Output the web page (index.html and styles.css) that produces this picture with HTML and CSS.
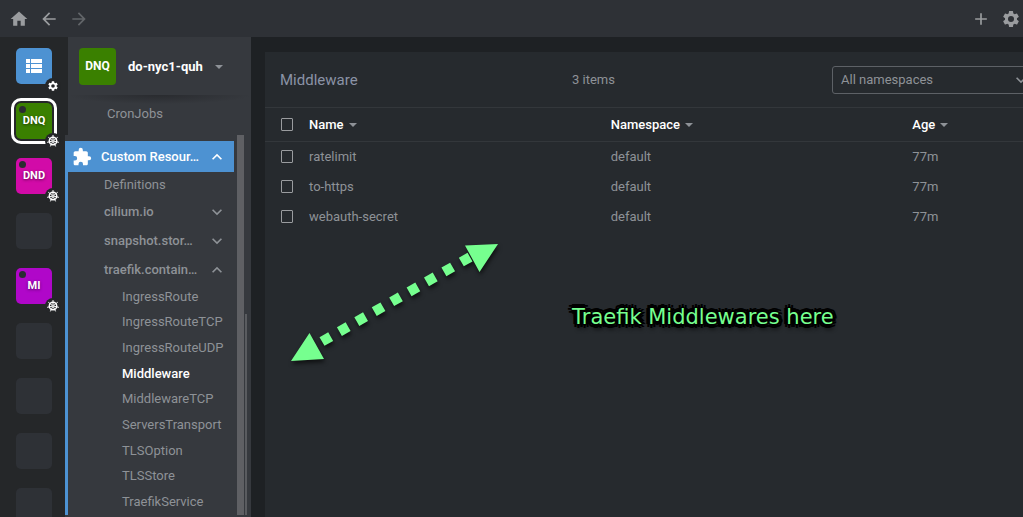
FILE: index.html
```html
<!DOCTYPE html>
<html lang="en">
<head>
<meta charset="utf-8">
<title>Middleware</title>
<link rel="stylesheet" href="styles.css">
</head>
<body>
<svg class="defs" aria-hidden="true">
  <symbol id="gear" viewBox="0 0 24 24"><path d="M19.14 12.94c.04-.3.06-.61.06-.94s-.02-.64-.07-.94l2.03-1.58a.49.49 0 0 0 .12-.61l-1.92-3.32a.488.488 0 0 0-.59-.22l-2.39.96c-.5-.38-1.03-.7-1.62-.94l-.36-2.54a.484.484 0 0 0-.48-.41h-3.84c-.24 0-.43.17-.47.41l-.36 2.54c-.59.24-1.13.57-1.62.94l-2.39-.96c-.22-.08-.47 0-.59.22L2.74 8.87c-.12.21-.08.47.12.61l2.03 1.58c-.05.3-.09.63-.09.94s.02.64.07.94l-2.03 1.58a.49.49 0 0 0-.12.61l1.92 3.32c.12.22.37.29.59.22l2.39-.96c.5.38 1.03.7 1.62.94l.36 2.54c.05.24.24.41.48.41h3.84c.24 0 .44-.17.47-.41l.36-2.54c.59-.24 1.13-.56 1.62-.94l2.39.96c.22.08.47 0 .59-.22l1.92-3.32c.12-.22.07-.47-.12-.61l-2.01-1.58zM12 15.6A3.6 3.6 0 1 1 12 8.400a3.6 3.6 0 0 1 0 7.200z"/></symbol>
  <symbol id="wheel" viewBox="0 0 24 24"><g fill="none" stroke="currentColor"><circle cx="12" cy="12" r="7.500" stroke-width="2.800"/><circle cx="12" cy="12" r="1.800" stroke-width="2"/><path stroke-width="2" d="M12 10V0M13.600 10.700l7.800-6.200M13.900 12.400l9.800 2.300M12.900 13.800l4.300 9M11.100 13.800l-4.300 9M10.100 12.400L.3 14.700M10.400 10.700L2.600 4.500"/></g></symbol>
  <symbol id="down" viewBox="0 0 24 24"><path d="M7.410 8.590 12 13.170l4.590-4.580L18 10l-6 6-6-6z"/></symbol>
  <symbol id="up" viewBox="0 0 24 24"><path d="M7.410 15.410 12 10.830l4.590 4.580L18 14l-6-6-6 6z"/></symbol>
  <symbol id="caret" viewBox="0 0 10 5"><path d="M0 0h10L5 5z"/></symbol>
</svg>

<header class="topbar">
  <button class="icon-btn" aria-label="Home"><svg viewBox="0 0 24 24"><path d="M10 20v-6h4v6h5v-8h3L12 3 2 12h3v8z"/></svg></button>
  <button class="icon-btn" aria-label="Back"><svg viewBox="0 0 24 24"><path d="M20 11H7.830l5.590-5.590L12 4l-8 8 8 8 1.410-1.410L7.830 13H20z"/></svg></button>
  <button class="icon-btn dim" aria-label="Forward"><svg viewBox="0 0 24 24"><path d="M4 11h12.170l-5.590-5.590L12 4l8 8-8 8-1.410-1.410L16.170 13H4z"/></svg></button>
  <button class="icon-btn push" aria-label="Add"><svg viewBox="0 0 24 24"><path d="M19 13h-6v6h-2v-6H5v-2h6V5h2v6h6z"/></svg></button>
  <button class="icon-btn" aria-label="Settings"><svg viewBox="0 0 24 24"><use href="#gear"/></svg></button>
</header>

<div class="body">
  <nav class="rail" aria-label="Hotbar">
    <button class="tile catalog" aria-label="Catalog"><svg class="list" viewBox="0 0 16 14"><path d="M0 0h4v4H0zM5 0h11v4H5zM0 5h4v4H0zM5 5h11v4H5zM0 10h4v4H0zM5 10h11v4H5z"/></svg><span class="badge"><svg><use href="#gear"/></svg></span></button>
    <button class="tile green selected"><i class="dot"></i>DNQ<span class="badge"><svg><use href="#wheel"/></svg></span></button>
    <button class="tile pink"><i class="dot"></i>DND<span class="badge"><svg><use href="#wheel"/></svg></span></button>
    <div class="tile"></div>
    <button class="tile purple"><i class="dot"></i>MI<span class="badge"><svg><use href="#wheel"/></svg></span></button>
    <div class="tile"></div>
    <div class="tile"></div>
    <div class="tile"></div>
    <div class="tile"></div>
  </nav>

  <aside class="sidebar">
    <button class="cluster"><span class="avatar">DNQ</span><span>do-nyc1-quh</span><svg class="caret"><use href="#caret"/></svg></button>
    <div class="fade"></div>
    <a class="cron" href="#cronjobs">CronJobs</a>
    <div class="overlay">
      <div class="menu">
        <button class="row active"><svg class="puzzle" viewBox="0 0 24 24"><path d="M20.500 11H19V7c0-1.100-.9-2-2-2h-4V3.500a2.500 2.500 0 0 0-5 0V5H4c-1.100 0-1.990.9-1.990 2v3.800H3.500a2.700 2.700 0 0 1 0 5.400H2V20c0 1.100.9 2 2 2h3.800v-1.500a2.700 2.700 0 0 1 5.400 0V22H17c1.100 0 2-.9 2-2v-4h1.500a2.500 2.500 0 0 0 0-5z"/></svg><span>Custom Resour…</span><svg class="chev"><use href="#up"/></svg></button>
        <a class="definitions" href="#definitions">Definitions</a>
        <button class="row group"><span>cilium.io</span><svg class="chev"><use href="#down"/></svg></button>
        <button class="row group"><span>snapshot.stor…</span><svg class="chev"><use href="#down"/></svg></button>
        <button class="row group"><span>traefik.contain…</span><svg class="chev"><use href="#up"/></svg></button>
        <div class="sub">
          <a href="#ingressroute">IngressRoute</a>
          <a href="#ingressroutetcp">IngressRouteTCP</a>
          <a href="#ingressrouteudp">IngressRouteUDP</a>
          <a class="current" href="#middleware">Middleware</a>
          <a href="#middlewaretcp">MiddlewareTCP</a>
          <a href="#serverstransport">ServersTransport</a>
          <a href="#tlsoption">TLSOption</a>
          <a href="#tlsstore">TLSStore</a>
          <a href="#traefikservice">TraefikService</a>
        </div>
      </div>
      <div class="scroll"></div>
      <div class="scroll-thin"></div>
    </div>
  </aside>

  <main class="panel">
    <div class="panel-head">
      <h1>Middleware</h1>
      <span>3 items</span>
      <div class="picker">
        <select aria-label="Namespace"><option>All namespaces</option></select>
        <svg class="chev"><use href="#down"/></svg>
      </div>
    </div>
    <table>
      <colgroup><col class="c-check"><col class="c-wide"><col class="c-wide"><col></colgroup>
      <thead>
        <tr><th><input type="checkbox" aria-label="Select all"></th><th>Name<svg class="caret"><use href="#caret"/></svg></th><th>Namespace<svg class="caret"><use href="#caret"/></svg></th><th>Age<svg class="caret"><use href="#caret"/></svg></th></tr>
      </thead>
      <tbody>
        <tr><td><input type="checkbox" aria-label="Select ratelimit"></td><td>ratelimit</td><td>default</td><td>77m</td></tr>
        <tr><td><input type="checkbox" aria-label="Select to-https"></td><td>to-https</td><td>default</td><td>77m</td></tr>
        <tr><td><input type="checkbox" aria-label="Select webauth-secret"></td><td>webauth-secret</td><td>default</td><td>77m</td></tr>
      </tbody>
    </table>
    <svg class="arrow" viewBox="0 0 230 140" aria-hidden="true">
      <path d="M42 111.500 191 26.500" fill="none" stroke="#76ff8f" stroke-width="10" stroke-dasharray="10 10.050"/>
      <path d="M11 131 29.500 103 44 129zM218 14l-33 1.500L199.500 42z" fill="#76ff8f"/>
    </svg>
    <p class="note">Traefik Middlewares here</p>
  </main>
</div>
</body>
</html>
```
FILE: styles.css
```css
* { box-sizing: border-box; }
body {
  margin: 0;
  height: 100vh;
  display: flex;
  flex-direction: column;
  overflow: hidden;
  background: #1e2124;
  color: #8e9297;
  font: 13px/20px Roboto, sans-serif;
}
button { border: 0; padding: 0; background: none; color: inherit; font: inherit; }
a { color: inherit; text-decoration: none; }
svg { display: block; flex: none; fill: currentColor; }
.defs { display: none; }

.topbar {
  flex: none;
  height: 37px;
  display: flex;
  align-items: center;
  gap: 10px;
  padding: 0 2px 0 9px;
  background: #2e3136;
}
.icon-btn { color: #9a9c9f; }
.icon-btn svg { width: 20px; height: 20px; }
.icon-btn.dim { color: #626569; }
.push { margin-left: auto; }
.body { flex: 1; min-height: 0; display: flex; }

.rail {
  width: 68px;
  flex: none;
  display: flex;
  flex-direction: column;
  gap: 19px;
  padding: 11px 16px 0;
  background: #252729;
  overflow: hidden;
}
.tile {
  position: relative;
  flex: none;
  width: 36px;
  height: 36px;
  display: flex;
  align-items: center;
  justify-content: center;
  border-radius: 5px;
  background: #2e3136;
  color: #fff;
  font-size: 11px;
  font-weight: 700;
  text-shadow: 0 1px 3px #0008;
}
.catalog { background: #4d92d2; }
.green { background: #3a8000; }
.pink { background: #d20ba8; }
.purple { background: #b007c9; }
.selected { outline: 3px solid #fff; outline-offset: 2px; }
.list { width: 16px; height: 14px; }
.dot {
  position: absolute;
  left: 3px;
  top: 3px;
  width: 7px;
  height: 7px;
  border-radius: 50%;
  background: #2b2d31;
}
.badge {
  position: absolute;
  right: -9px;
  bottom: -10px;
  width: 16px;
  height: 16px;
  display: grid;
  place-items: center;
  border-radius: 50%;
  background: #252729;
}
.badge svg { width: 12px; height: 12px; }

.sidebar {
  width: 183px;
  flex: none;
  display: flex;
  flex-direction: column;
  background: #36393e;
}
.cluster {
  display: flex;
  align-items: center;
  gap: 12px;
  padding: 11px 11px 10px;
  color: #fff;
  font-weight: 700;
}
.avatar {
  width: 37px;
  height: 37px;
  border-radius: 4px;
  background: #3a8000;
  font-size: 12px;
  line-height: 37px;
}
.caret { width: 8px; height: 4px; color: #8e9297; }
.fade { height: 9px; background: radial-gradient(50% 100% at 50% 0, #292b2f, #36393e); }
.cron { padding: 0 39px 18px; line-height: 20px; }

.overlay {
  position: relative;
  flex: 1;
  min-height: 0;
  display: flex;
  margin-top: -7px;
  margin-left: -3px;
  padding-bottom: 2px;
  background: #36393e;
}
.menu {
  width: 169px;
  display: flex;
  flex-direction: column;
  margin-top: 6px;
  border-left: 3px solid #4d92d2;
}
.row {
  display: flex;
  align-items: center;
  justify-content: space-between;
  height: 29px;
  padding: 0 7px 0 36px;
  font-weight: 500;
}
.row.active {
  height: 31px;
  padding-left: 4px;
  background: #4d92d2;
  color: #fff;
}
.puzzle { width: 20px; height: 20px; }
.active span { margin-right: auto; padding-left: 9px; }
.chev { width: 20px; height: 20px; }
.definitions { padding-left: 36px; line-height: 25px; }
.sub {
  flex: 1;
  display: grid;
  grid-auto-rows: 1fr;
  align-items: center;
  padding-left: 54px;
}
.current { color: #fff; font-weight: 500; }
.scroll { width: 7px; margin: 0 1px 0 3px; background: #5f6064; }
.scroll-thin { width: 2px; margin-top: 179px; background: #5a5c60; }

.panel {
  position: relative;
  flex: 1;
  min-width: 0;
  margin: 15px 0 0 14px;
  background: #262a2e;
  overflow: hidden;
}
.panel-head {
  display: grid;
  grid-template-columns: 292px 1fr 200px;
  align-items: center;
  height: 55px;
  margin-right: -9px;
  padding-left: 15px;
}
h1 { margin: 0; color: #8b93a6; font-size: 15px; font-weight: 400; }
.picker { position: relative; }
select {
  width: 100%;
  height: 28px;
  padding: 0 8px;
  appearance: none;
  border: 1px solid #5d6166;
  border-radius: 3px;
  background: none;
  color: #8e9297;
  font: inherit;
}
.picker .chev { position: absolute; right: 1px; top: 4px; }
table { width: 100%; table-layout: fixed; border-collapse: collapse; }
.c-check { width: 44px; }
.c-wide { width: 39.8%; }
th, td { height: 30px; padding: 0; text-align: left; vertical-align: middle; }
th {
  height: 34px;
  border: solid #33373b;
  border-width: 1px 0;
  color: #fff;
  font-weight: 500;
}
th .caret { display: inline-block; margin-left: 5px; vertical-align: 2px; }
input {
  display: block;
  width: 12px;
  height: 13px;
  margin: 0 0 0 16px;
  appearance: none;
  border: 1px solid #9a9c9f;
  border-radius: 1px;
}
.arrow {
  position: absolute;
  left: 15px;
  top: 178px;
  width: 230px;
  height: 140px;
  filter: drop-shadow(1px 3px 2px #0009);
}
.note {
  position: absolute;
  left: 307px;
  top: 251px;
  margin: 0;
  color: #76ff8f;
  font: 21px/28px "DejaVu Sans", sans-serif;
  white-space: nowrap;
  text-shadow:
    4px 0 #000, -4px 0 #000, 0 4px #000, 0 -4px #000,
    3px 3px #000, -3px 3px #000, 3px -3px #000, -3px -3px #000,
    2px 0 #000, -2px 0 #000, 0 2px #000, 0 -2px #000,
    1px 1px #000, -1px -1px #000, 1px -1px #000, -1px 1px #000,
    1px 5px 4px #000;
}
```
